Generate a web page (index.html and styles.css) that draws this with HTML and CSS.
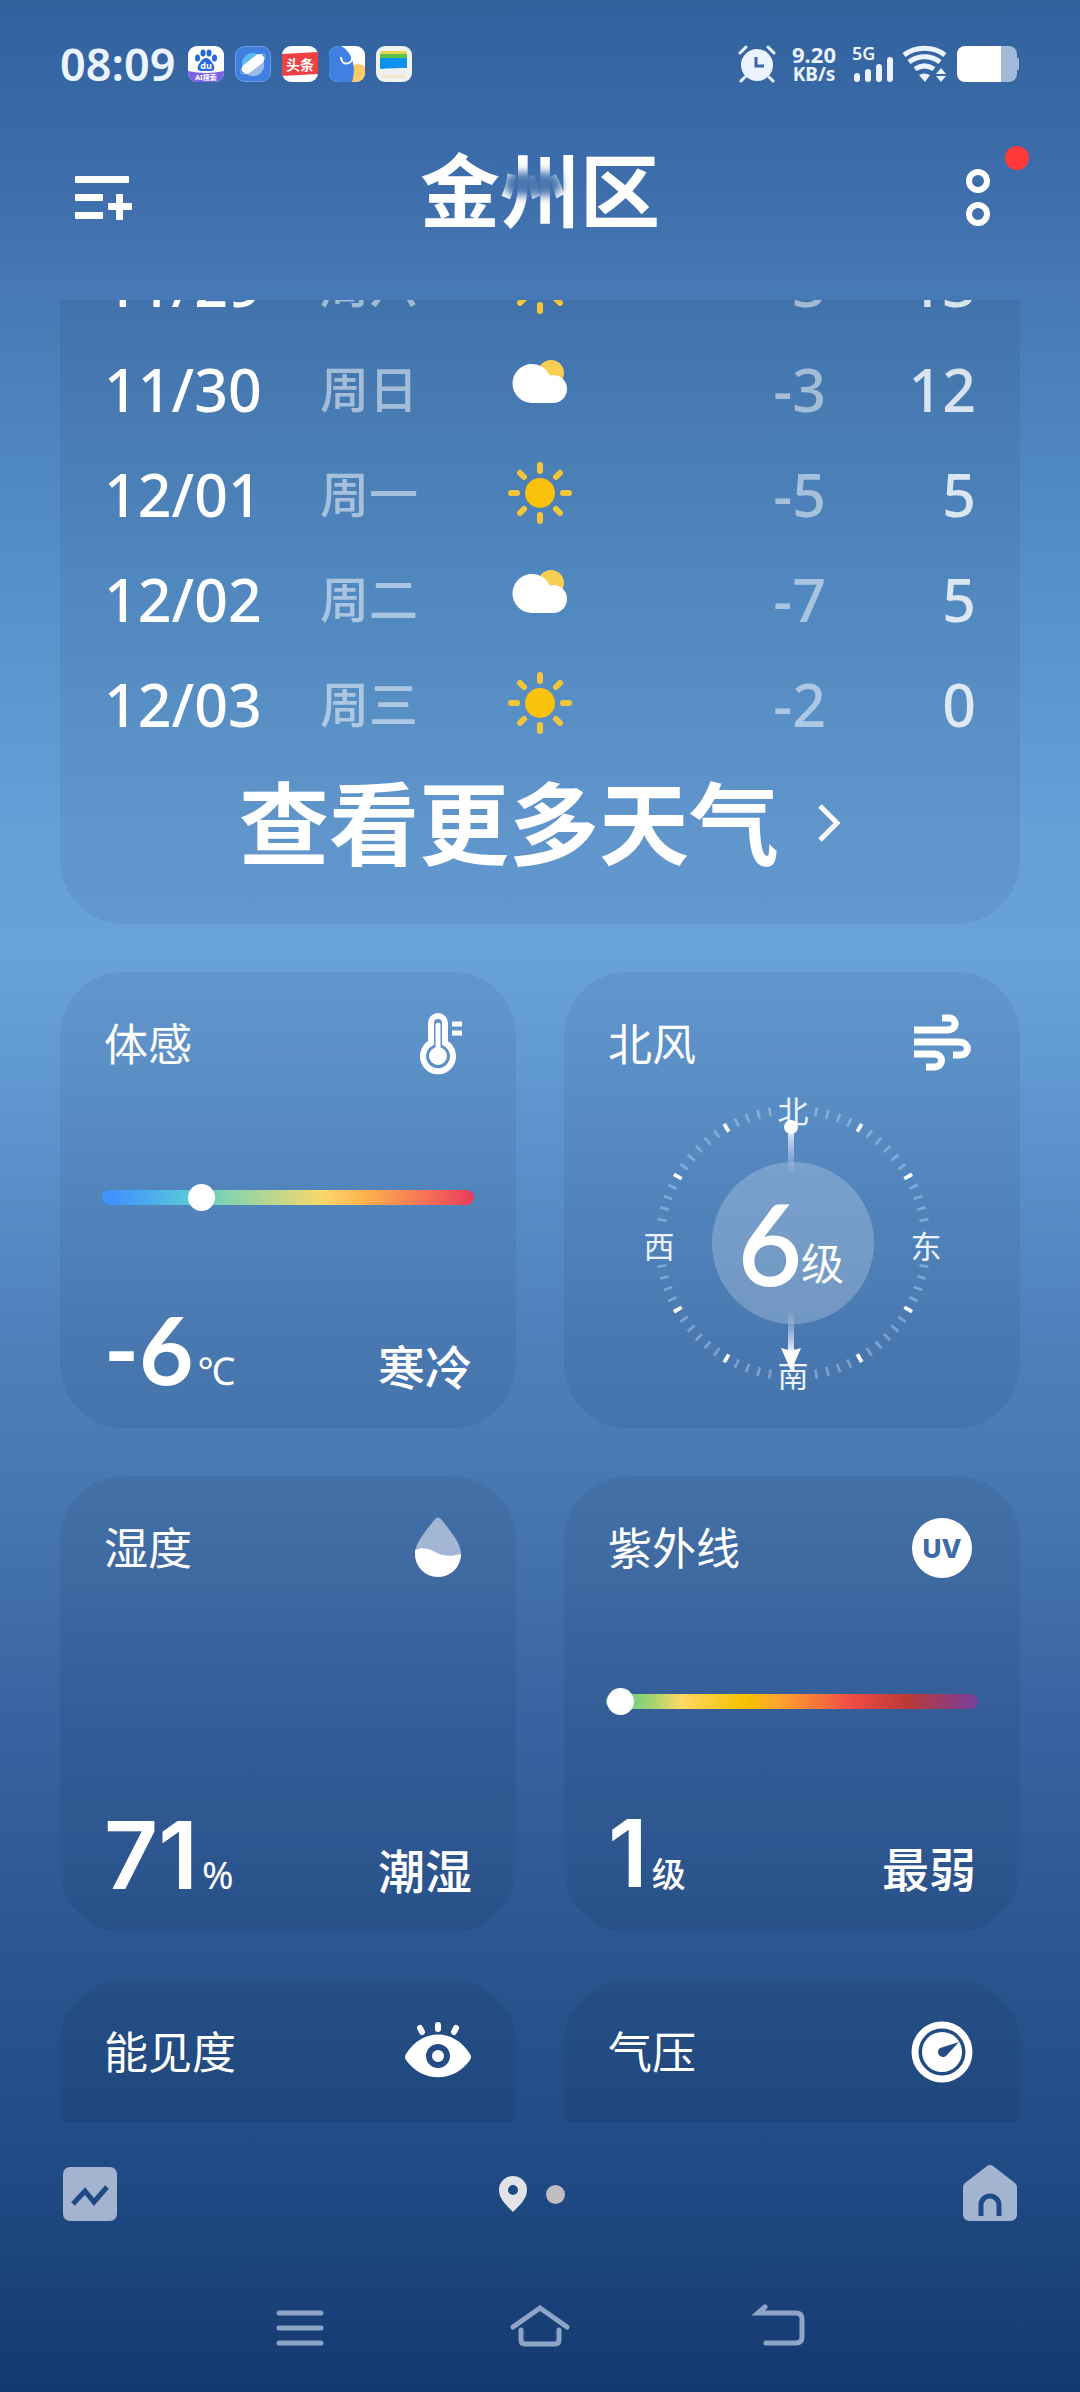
FILE: index.html
```html
<!DOCTYPE html>
<html lang="zh-CN">
<head>
    <meta charset="UTF-8">
    <meta name="viewport" content="width=device-width, initial-scale=1.0">
    <title>金州区天气</title>
    <link rel="stylesheet" href="styles.css">
</head>
<body>
    <!-- Shared weather icons -->
    <svg class="defs" width="0" height="0" aria-hidden="true">
        <symbol id="sun" viewBox="0 0 64 64">
            <circle cx="32" cy="31" r="15" fill="#fbc20c"/>
            <g stroke="#f3c63a" stroke-width="6" stroke-linecap="round">
                <path d="M32 3v6M32 53v6M3 31h6M55 31h6M12 11l4 4M48 47l4 4M52 11l-4 4M16 47l-4 4"/>
            </g>
        </symbol>
        <symbol id="cloudy" viewBox="0 0 64 64">
            <circle cx="43" cy="16" r="13" fill="#f8cf52"/>
            <path d="M24 7a19 19 0 0 1 18 12 14 14 0 0 1 3-1 14 14 0 0 1 0 28H24A19 19 0 0 1 24 7z" fill="#fff"/>
        </symbol>
    </svg>

    <div class="status-bar">
        <div class="status-left">
            <span class="clock">08:09</span>
            <svg class="app" viewBox="0 0 36 36">
                <defs><clipPath id="tile"><rect width="36" height="36" rx="9"/></clipPath></defs>
                <g clip-path="url(#tile)">
                    <rect width="36" height="36" fill="#fff"/>
                    <path d="M0 25q18 4 36 0v11H0z" fill="#7a63e6"/>
                    <g fill="#2468e0">
                        <ellipse cx="9.500" cy="12" rx="2.500" ry="3.500"/>
                        <ellipse cx="15" cy="7" rx="2.500" ry="3.500"/>
                        <ellipse cx="21" cy="7" rx="2.500" ry="3.500"/>
                        <ellipse cx="26.500" cy="12" rx="2.500" ry="3.500"/>
                        <path d="M18 12c3 0 5 3 7 6s2 7-2 7H13c-4 0-4-4-2-7s4-6 7-6z"/>
                    </g>
                    <text x="18" y="23" text-anchor="middle" font-size="9" font-weight="700" fill="#fff">du</text>
                    <text x="18" y="34" text-anchor="middle" font-size="7" font-weight="700" fill="#fff">AI搜索</text>
                </g>
            </svg>
            <svg class="app" viewBox="0 0 36 36">
                <rect x="0.500" y="0.500" width="35" height="35" rx="9" fill="#3f7fe0" stroke="#6d9be0"/>
                <circle cx="18" cy="18" r="11" fill="#5cbcf2"/>
                <path d="M8 24a11 11 0 0 0 20-10z" fill="#9bb9ea"/>
                <ellipse cx="18" cy="18" rx="15" ry="5" fill="none" stroke="#8db4ee" transform="rotate(-38 18 18)"/>
                <rect x="5" y="13" width="26" height="10" rx="5" fill="#fff" transform="rotate(-38 18 18)"/>
            </svg>
            <svg class="app" viewBox="0 0 36 36">
                <rect width="36" height="36" rx="9" fill="#fff"/>
                <path d="M0 8l36-2v22L0 30z" fill="#f04142"/>
                <text x="18" y="24" text-anchor="middle" font-size="14" font-weight="700" fill="#fff">头条</text>
            </svg>
            <svg class="app" viewBox="0 0 36 36">
                <g clip-path="url(#tile)">
                    <rect width="36" height="36" fill="#fff"/>
                    <circle cx="29" cy="28" r="10" fill="#fbcb6b"/>
                    <path d="M0 0h12c10 5 16 20 11 36H0z" fill="#3f80e2"/>
                    <path d="M12 11c0 9 11 8 11 1" fill="none" stroke="#fff" stroke-width="2"/>
                </g>
            </svg>
            <svg class="app" viewBox="0 0 36 36">
                <rect width="36" height="36" rx="9" fill="#eef2ee"/>
                <rect x="4" y="5" width="27" height="10" rx="2" fill="#e8d44c"/>
                <path d="M4 8h27v8H4z" fill="#5cc04c"/>
                <path d="M4 12h27v10c-9 0-18 0-27 1z" fill="#0e92ee"/>
                <rect x="6" y="29" width="24" height="3" fill="#f4e6cc"/>
            </svg>
        </div>
        <div class="status-right">
            <svg width="38" height="38" viewBox="0 0 38 38">
                <circle cx="19" cy="20" r="16" fill="#eaf3ff"/>
                <path d="M2 8l6-6M36 8l-6-6M7 32l-4 4M31 32l4 4" stroke="#eaf3ff" stroke-width="3" stroke-linecap="round"/>
                <path d="M18 12v9h8" fill="none" stroke="#3767a4" stroke-width="3"/>
            </svg>
            <div class="speed"><span class="rate">9.20</span><span>KB/s</span></div>
            <svg width="42" height="38" viewBox="0 0 42 38" fill="#eaf3ff">
                <text x="0" y="15" font-size="18" font-weight="600">5G</text>
                <rect x="2" y="28" width="6" height="9" rx="3"/>
                <rect x="13" y="24" width="6" height="13" rx="3"/>
                <rect x="24" y="19" width="6" height="18" rx="3"/>
                <rect x="35" y="12" width="6" height="25" rx="3"/>
            </svg>
            <svg width="46" height="38" viewBox="0 0 46 38" fill="none" stroke="#eaf3ff" stroke-width="5">
                <path d="M2 10c12-9 29-9 41 0M7 17c9-7 22-7 31 0M13 24c6-4 13-4 19 0"/>
                <path d="M17 30q5-3 11 0l-5 7z" fill="#eaf3ff" stroke="none"/>
                <path d="M34 29l5-6 5 6zM34 31h10l-5 6z" fill="#eaf3ff" stroke="none"/>
            </svg>
            <svg width="64" height="38" viewBox="0 0 64 38">
                <path d="M44 1h9a8 8 0 0 1 8 8v4h2v12h-2v4a8 8 0 0 1-8 8h-9z" fill="#a2b9db"/>
                <path d="M9 1h36v36H9a8 8 0 0 1-8-8V9a8 8 0 0 1 8-8z" fill="#fff"/>
            </svg>
        </div>
    </div>

    <header>
        <button class="icon-button" aria-label="城市管理">
            <svg width="60" height="48" viewBox="0 0 60 48" fill="#fff">
                <rect x="1" y="2" width="54" height="7" rx="1"/>
                <rect x="1" y="20" width="28" height="7" rx="1"/>
                <rect x="1" y="38" width="28" height="7" rx="1"/>
                <rect x="34" y="29" width="24" height="7" rx="1"/>
                <rect x="42" y="20" width="7" height="26" rx="1"/>
            </svg>
        </button>
        <h1>金州区<span class="smudge"></span></h1>
        <button class="icon-button more" aria-label="更多">
            <svg width="24" height="60" viewBox="0 0 24 60" fill="none" stroke="#fff" stroke-width="6">
                <circle cx="12" cy="13" r="9"/>
                <circle cx="12" cy="46" r="9"/>
            </svg>
            <span class="badge"></span>
        </button>
    </header>

    <main>
        <section class="panel forecast">
            <table>
                <tbody>
                    <tr>
                        <td class="date">11/29</td>
                        <td class="day">周六</td>
                        <td class="sky"><svg><use href="#sun"/></svg></td>
                        <td class="low">-3</td>
                        <td class="high">13</td>
                    </tr>
                    <tr>
                        <td class="date">11/30</td>
                        <td class="day">周日</td>
                        <td class="sky"><svg><use href="#cloudy"/></svg></td>
                        <td class="low">-3</td>
                        <td class="high">12</td>
                    </tr>
                    <tr>
                        <td class="date">12/01</td>
                        <td class="day">周一</td>
                        <td class="sky"><svg><use href="#sun"/></svg></td>
                        <td class="low">-5</td>
                        <td class="high">5</td>
                    </tr>
                    <tr>
                        <td class="date">12/02</td>
                        <td class="day">周二</td>
                        <td class="sky"><svg><use href="#cloudy"/></svg></td>
                        <td class="low">-7</td>
                        <td class="high">5</td>
                    </tr>
                    <tr>
                        <td class="date">12/03</td>
                        <td class="day">周三</td>
                        <td class="sky"><svg><use href="#sun"/></svg></td>
                        <td class="low">-2</td>
                        <td class="high">0</td>
                    </tr>
                </tbody>
            </table>
            <a class="more-weather" href="#">
                查看更多天气
                <svg width="24" height="40" viewBox="0 0 24 40" fill="none" stroke="#fff" stroke-width="5">
                    <path d="M3 3l17 17L3 37"/>
                </svg>
            </a>
        </section>

        <div class="cards">
            <section class="panel card">
                <div class="card-head">
                    <h2>体感</h2>
                    <svg viewBox="0 0 68 68" fill="none" stroke="#fff">
                        <path d="M27 33V13a7 7 0 0 1 14 0v20a15 15 0 1 1-14 0z" stroke-width="6"/>
                        <circle cx="34" cy="46" r="9" fill="#fff" stroke="none"/>
                        <path d="M34 15v30" stroke-width="5" stroke-linecap="round"/>
                        <path d="M48 14h10M48 23h10" stroke-width="5"/>
                    </svg>
                </div>
                <div class="scale feels"><span class="knob" style="left: 27%"></span></div>
                <div class="reading">
                    <span class="value round">-6</span><span class="unit">℃</span>
                    <span class="level">寒冷</span>
                </div>
            </section>

            <section class="panel card">
                <div class="card-head">
                    <h2>北风</h2>
                    <svg viewBox="0 0 68 68" fill="none" stroke="#fff" stroke-width="7">
                        <path d="M6 20h33c11 0 10-12 2-12h-7M6 32h45c11 0 11 13 1 13h-7M6 44h20c10 0 10 13 0 13h-8"/>
                    </svg>
                </div>
                <svg class="compass" viewBox="0 0 300 300">
                    <defs>
                        <linearGradient id="tail" x1="0" y1="0" x2="0" y2="1">
                            <stop offset="0" stop-color="#e6efff"/>
                            <stop offset="1" stop-color="#b0bfe4" stop-opacity="0.2"/>
                        </linearGradient>
                        <linearGradient id="tip" x1="0" y1="1" x2="0" y2="0">
                            <stop offset="0" stop-color="#e6efff"/>
                            <stop offset="1" stop-color="#b0bfe4" stop-opacity="0.1"/>
                        </linearGradient>
                    </defs>
                    <!-- dial ticks every 5 degrees, bright ones every 30 -->
                    <circle class="ticks" cx="151" cy="150" r="133" pathLength="360" transform="rotate(-80.600 151 150)"/>
                    <circle class="ticks-major" cx="151" cy="150" r="133" pathLength="360" transform="rotate(-60.800 151 150)"/>
                    <circle cx="151" cy="150" r="81" fill="#fff" fill-opacity="0.22"/>
                    <g class="direction">
                        <text x="151" y="30">北</text>
                        <text x="284" y="165">东</text>
                        <text x="151" y="294">南</text>
                        <text x="17" y="165">西</text>
                    </g>
                    <rect x="146" y="36" width="6" height="42" fill="url(#tail)"/>
                    <circle cx="149" cy="34" r="7" fill="#fff"/>
                    <rect x="146" y="218" width="6" height="40" fill="url(#tip)"/>
                    <path d="M139 255q10 4 20 0l-10 23z" fill="#fff"/>
                    <text class="force" x="96" y="192">6</text>
                    <text class="force-unit" x="159" y="187">级</text>
                </svg>
            </section>

            <section class="panel card">
                <div class="card-head">
                    <h2>湿度</h2>
                    <svg viewBox="0 0 68 68">
                        <path d="M31 5q3-3 6 0c10 13 20 24 20 35a23 23 0 0 1-46 0C11 29 21 18 31 5z" fill="#a2b6d4"/>
                        <path d="M11 36c9-4 16 0 22 3s14 4 24 1a23 23 0 0 1-46 0z" fill="#fff"/>
                    </svg>
                </div>
                <div class="reading">
                    <span class="value">71</span><span class="unit">%</span>
                    <span class="level">潮湿</span>
                </div>
            </section>

            <section class="panel card">
                <div class="card-head">
                    <h2>紫外线</h2>
                    <svg viewBox="0 0 68 68">
                        <circle cx="34" cy="34" r="30" fill="#fff"/>
                        <text class="uv" x="34" y="44">UV</text>
                    </svg>
                </div>
                <div class="scale uv-scale"><span class="knob" style="left: 4%"></span></div>
                <div class="reading">
                    <span class="value">1</span><span class="unit cjk">级</span>
                    <span class="level">最弱</span>
                </div>
            </section>

            <section class="panel card">
                <div class="card-head">
                    <h2>能见度</h2>
                    <svg viewBox="0 0 68 68">
                        <path d="M2 36C18 10 50 10 66 36q2 3 0 6C50 65 18 65 2 42q-2-3 0-6z" fill="#fff"/>
                        <circle cx="34" cy="38" r="9" fill="none" stroke="#264c86" stroke-width="6"/>
                        <path d="M34 7v4M16 10l2 4M52 10l-2 4" stroke="#fff" stroke-width="6" stroke-linecap="round"/>
                    </svg>
                </div>
            </section>

            <section class="panel card">
                <div class="card-head">
                    <h2>气压</h2>
                    <svg viewBox="0 0 68 68">
                        <circle cx="34" cy="34" r="27" fill="none" stroke="#fff" stroke-width="7"/>
                        <circle cx="34" cy="34" r="20" fill="#fff"/>
                        <path d="M51 24L38 38a5 5 0 1 1-6-8z" fill="#264c86"/>
                    </svg>
                </div>
            </section>
        </div>
    </main>

    <footer>
        <button class="icon-button" aria-label="趋势">
            <svg width="56" height="58" viewBox="0 0 56 58">
                <rect x="1" y="2" width="54" height="54" rx="7" fill="#a2b4d0"/>
                <path d="M11 39l12-13 9 11 13-15" fill="none" stroke="#204a84" stroke-width="5"/>
            </svg>
        </button>
        <div class="pager">
            <svg width="30" height="36" viewBox="0 0 30 36">
                <path fill-rule="evenodd" d="M15 0a14 14 0 0 1 14 14c0 9-8 16-14 22C9 30 1 23 1 14A14 14 0 0 1 15 0zm0 9a5 5 0 1 0 0 10 5 5 0 0 0 0-10z" fill="#e2e3e6"/>
            </svg>
            <span class="dot"></span>
        </div>
        <button class="icon-button" aria-label="首页">
            <svg width="56" height="58" viewBox="0 0 56 58">
                <path d="M25 1q3-2 6 0l22 17q2 2 2 4v27q0 7-7 7H8q-7 0-7-7V22q0-2 2-4z" fill="#a2b4d0"/>
                <path d="M19 51V40a9 9 0 0 1 18 0v11" fill="none" stroke="#204a84" stroke-width="5"/>
            </svg>
        </button>
    </footer>

    <nav>
        <button class="icon-button" aria-label="最近任务">
            <svg width="60" height="48" viewBox="0 0 60 48">
                <path d="M9 9h42M9 24h42M9 39h42"/>
            </svg>
        </button>
        <button class="icon-button" aria-label="主屏幕">
            <svg width="60" height="48" viewBox="0 0 60 48">
                <path d="M3 23L30 4l27 19M11 26v10q0 4 4 4h30q4 0 4-4V26"/>
            </svg>
        </button>
        <button class="icon-button" aria-label="返回">
            <svg width="60" height="48" viewBox="0 0 60 48">
                <path d="M15 3L8 9h38q6 0 6 6v18q0 6-6 6H16"/>
            </svg>
        </button>
    </nav>
</body>
</html>
```
FILE: styles.css
```css
* {
    box-sizing: border-box;
}
body {
    font-family: 'Noto Sans', 'Noto Sans CJK SC', sans-serif;
    margin: 0;
    min-height: 100vh;
    display: flex;
    flex-direction: column;
    color: #fff;
    background: linear-gradient(#32629e 0%, #3c6ca9 7%, #4679b5 12%, #5590ca 24%, #66a0d9 35%, #69a2da 40%, #6098d2 45%, #4e80bc 56%, #4878b2 62%, #3863a2 72%, #2a558f 82%, #204a84 91%, #153a70 100%);
}
svg {
    display: block;
}
.defs {
    position: absolute;
}
h1, h2 {
    margin: 0;
}
.icon-button {
    padding: 0;
    border: 0;
    background: none;
    cursor: pointer;
}

/* Status bar */
.status-bar {
    display: flex;
    justify-content: space-between;
    align-items: center;
    height: 128px;
    padding: 0 60px;
}
.status-left, .status-right {
    display: flex;
    align-items: center;
}
.status-left {
    gap: 11px;
}
.status-right {
    gap: 8px;
}
.clock {
    font-size: 45px;
    font-weight: 600;
    line-height: 60px;
    margin-right: 2px;
    color: #eaf3ff;
}
.app {
    width: 36px;
    height: 36px;
}
.speed {
    display: flex;
    flex-direction: column;
    align-items: center;
    width: 60px;
    font-size: 19px;
    font-weight: 700;
    line-height: 20px;
    color: #eaf3ff;
}
.rate {
    font-size: 22px;
}

/* Title row */
header {
    display: grid;
    grid-template-columns: 1fr auto 1fr;
    justify-items: start;
    align-items: center;
    height: 172px;
    padding: 0 74px 32px;
}
h1 {
    position: relative;
    padding-bottom: 16px;
    font-size: 80px;
    font-weight: 700;
    line-height: 96px;
}
.smudge {
    position: absolute;
    left: 84px;
    top: 30px;
    width: 58px;
    height: 24px;
    border-radius: 12px;
    background: rgba(63, 112, 172, 0.95);
    filter: blur(4px);
}
.more {
    position: relative;
    justify-self: end;
    margin-right: 16px;
}
.badge {
    position: absolute;
    right: -39px;
    top: -22px;
    width: 24px;
    height: 24px;
    border-radius: 50%;
    background: #ff3a38;
}

/* Scrolling content, cut off by the title row and the footer */
main {
    flex: 1 1 0;
    min-height: 0;
    overflow: hidden;
    padding: 0 60px;
}
.panel {
    background: rgba(0, 0, 0, 0.06);
    border-radius: 64px;
}
.forecast {
    margin-top: -69px;
    padding: 0 44px 34px;
}
table {
    width: 100%;
    table-layout: fixed;
    border-collapse: collapse;
}
td {
    height: 105px;
    padding: 0;
    font-size: 59px;
    font-weight: 500;
    line-height: 80px;
    vertical-align: middle;
}
.date {
    width: 216px;
}
.day {
    width: 188px;
    font-size: 49px;
    color: rgba(255, 255, 255, 0.5);
}
.sky svg {
    width: 64px;
    height: 64px;
}
.low, .high {
    text-align: right;
}
.low {
    width: 150px;
    color: rgba(255, 255, 255, 0.5);
}
.high {
    width: 150px;
    color: rgba(255, 255, 255, 0.8);
}
.more-weather {
    display: flex;
    justify-content: center;
    align-items: center;
    gap: 38px;
    height: 134px;
    font-size: 90px;
    font-weight: 700;
    line-height: 104px;
    color: #fff;
    text-decoration: none;
}

.cards {
    display: grid;
    grid-template-columns: 1fr 1fr;
    gap: 48px;
    margin-top: 48px;
}
.card {
    display: flex;
    flex-direction: column;
    aspect-ratio: 1;
    padding: 38px 44px 10px;
}
.card-head {
    display: flex;
    justify-content: space-between;
    align-items: center;
}
.card-head svg {
    width: 68px;
    height: 68px;
}
h2 {
    font-size: 44px;
    font-weight: 400;
    line-height: 68px;
}
.uv {
    font-family: Inter, sans-serif;
    font-size: 26px;
    font-weight: 800;
    text-anchor: middle;
    fill: #3d6ba5;
}
.scale {
    position: relative;
    height: 15px;
    margin: 112px -2px 0;
    border-radius: 8px;
}
.feels {
    background: linear-gradient(90deg, #4193fb 3%, #56c4dc 22%, #80d4b0 33%, #f9d86c 59%, #fdb14c 71%, #f4655a 90%, #e93c58 100%);
}
.uv-scale {
    background: linear-gradient(90deg, #62d08c 4%, #a0d370 12%, #fbd964 20%, #f8c200 37%, #fda62c 46%, #f04c46 66%, #b93a38 81%, #7c3f98 99%);
}
.knob {
    position: absolute;
    top: -6px;
    width: 27px;
    height: 27px;
    margin-left: -14px;
    border-radius: 50%;
    background: #fff;
}
.reading {
    display: flex;
    align-items: baseline;
    margin-top: auto;
    line-height: 96px;
}
.value {
    font-family: Inter, sans-serif;
    font-size: 94px;
    font-weight: 600;
}
.round {
    font-family: Lato, sans-serif;
    font-weight: 700;
}
.unit {
    margin-left: 4px;
    font-size: 38px;
}
.cjk {
    font-size: 34px;
    font-weight: 500;
}
.level {
    margin-left: auto;
    font-size: 47px;
    font-weight: 500;
}

/* Wind dial */
.compass {
    width: 300px;
    height: 300px;
    margin: 15px auto 0;
    overflow: visible;
}
.ticks, .ticks-major {
    fill: none;
    stroke-width: 9;
}
.ticks {
    stroke: rgba(200, 222, 255, 0.4);
    stroke-dasharray: 1.2 3.8 1.2 3.8 1.2 3.8 1.2 8.8 1.2 3.8 1.2 3.8 1.2 3.8 1.2 3.8 1.2 8.8 1.2 3.8 1.2 3.8 1.2 3.8 1.2 18.8;
}
.ticks-major {
    stroke: #fff;
    stroke-dasharray: 1.6 28.4 1.6 58.4;
}
.direction {
    font-size: 31px;
    text-anchor: middle;
    fill: #eaf3ff;
}
.force {
    font-family: Lato, sans-serif;
    font-size: 110px;
    fill: #fff;
    stroke: #fff;
    stroke-width: 2;
}
.force-unit {
    font-size: 43px;
    fill: #fff;
}

/* Page indicator and shortcuts */
footer {
    display: flex;
    justify-content: space-between;
    align-items: center;
    height: 144px;
    padding: 0 62px;
}
.pager {
    display: flex;
    align-items: center;
    gap: 18px;
    padding-right: 18px;
}
.dot {
    width: 19px;
    height: 19px;
    border-radius: 50%;
    background: #bfbdbd;
}

/* System navigation */
nav {
    display: flex;
    justify-content: center;
    align-items: flex-start;
    gap: 180px;
    height: 126px;
    padding-top: 38px;
}
nav svg {
    fill: none;
    stroke: #8fa5c8;
    stroke-width: 5;
    stroke-linecap: round;
}
```
